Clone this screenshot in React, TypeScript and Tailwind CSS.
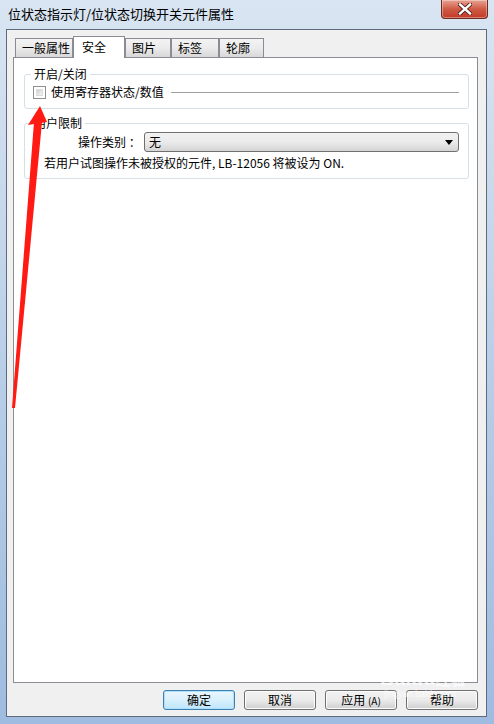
import React from 'react';

const cjk = { fontFamily: '"Noto Sans CJK SC", "Noto Sans", sans-serif' };

function Tab({ label, active, w }: { label: string; active?: boolean; w: string }) {
  if (active) {
    return (
      <div
        className={`${w} h-[22px] -mb-px z-10 relative flex items-start pt-[2px] pl-[8px] bg-white border border-b-0 border-[#898c95] text-[12px] leading-[16px] text-black`}
      >
        {label}
      </div>
    );
  }
  return (
    <div
      className={`${w} h-[19px] flex items-center pl-[6px] border border-b-0 border-[#898c95] bg-gradient-to-b from-[#f3f3f3] via-[#ebebeb] to-[#d8d8d8] text-[12px] leading-[16px] text-black`}
    >
      {label}
    </div>
  );
}

function Btn({ label, primary }: { label: React.ReactNode; primary?: boolean }) {
  return (
    <button
      className={
        primary
          ? 'w-[72px] h-[20px] rounded-[3px] border border-[#3c7fb1] bg-gradient-to-b from-[#eaf6fd] via-[#d9f0fc] to-[#bee6fd] text-[12px] leading-none text-black shadow-[inset_0_0_0_1px_#aee0fb]'
          : 'w-[72px] h-[20px] rounded-[3px] border border-[#707070] bg-gradient-to-b from-[#f2f2f2] via-[#ebebeb] to-[#cfcfcf] text-[12px] leading-none text-black shadow-[inset_0_0_0_1px_#fcfcfc]'
      }
    >
      {label}
    </button>
  );
}

export default function App() {
  return (
    <div
      className="relative w-[494px] h-[724px] overflow-hidden bg-gradient-to-b from-[#d9e5f2] via-[#b9cfe8] to-[#9fbbe0] flex flex-col"
      style={cjk}
    >
      {/* 标题栏 */}
      <div className="h-[29px] shrink-0 flex items-center pl-[8px] pb-[2px] text-[13px] text-black">
        位状态指示灯/位状态切换开关元件属性
      </div>

      {/* 关闭按钮 */}
      <div className="absolute top-0 right-[6px] w-[47px] h-[19px] rounded-b-[4px] border border-t-0 border-[#6b2a22] bg-gradient-to-b from-[#e8a393] via-[#cf5a45] to-[#c23b26] flex items-center justify-center shadow-[inset_0_0_0_1px_rgba(255,255,255,0.35)]">
        <svg width="14" height="12" viewBox="0 0 14 12">
          <path
            d="M2 1.5 L12 10.5 M12 1.5 L2 10.5"
            stroke="#4a1e18"
            strokeWidth="4.2"
            strokeLinecap="square"
          />
          <path
            d="M2 1.5 L12 10.5 M12 1.5 L2 10.5"
            stroke="#ffffff"
            strokeWidth="2.4"
            strokeLinecap="square"
          />
        </svg>
      </div>

      {/* 客户区 */}
      <div className="mx-[6px] mr-[7px] mb-[7px] flex-1 flex flex-col border border-[#5d6b7c] bg-[#f0f0f0]">
        {/* 选项卡 */}
        <div className="flex items-end pl-[8px] pt-[6px] h-[27px] shrink-0">
          <Tab label="一般属性" w="w-[58px]" />
          <Tab label="安全" w="w-[52px]" active />
          <Tab label="图片" w="w-[46px]" />
          <Tab label="标签" w="w-[48px]" />
          <Tab label="轮廓" w="w-[45px]" />
        </div>

        {/* 面板 */}
        <div className="ml-[6px] mr-[8px] h-[626px] border border-[#898c95] bg-white pl-[10px] pr-[8px] pt-[16px]">
          {/* 开启/关闭 */}
          <div className="relative h-[35px] rounded-[3px] border border-[#d5dfe5]">
            <div className="absolute -top-[9px] left-[6px] px-[3px] bg-white text-[12px] leading-[16px] text-black">
              开启/关闭
            </div>
            <div className="flex items-center h-full pt-[1px] pl-[8px] pr-[9px]">
              <div className="w-[13px] h-[13px] border border-[#8f8f8f] bg-white p-[2px]">
                <div className="w-full h-full bg-gradient-to-br from-[#cbcfd5] to-[#f6f6f6] border border-[#dcdcdc]" />
              </div>
              <span className="ml-[5px] text-[12px] leading-[16px] text-black">使用寄存器状态/数值</span>
              <div className="flex-1 ml-[7px] h-px bg-[#a0a0a0]" />
            </div>
          </div>

          {/* 用户限制 */}
          <div className="relative mt-[14px] h-[56px] rounded-[3px] border border-[#d5dfe5] pt-[8px]">
            <div className="absolute -top-[9px] left-[6px] px-[3px] bg-white text-[12px] leading-[16px] text-black">
              用户限制
            </div>
            <div className="flex items-center pr-[9px]">
              <span className="ml-[53px] w-[66px] text-[12px] leading-[16px] text-black whitespace-pre">操作类别 ：</span>
              <div className="flex-1 h-[20px] rounded-[3px] border border-[#707070] bg-gradient-to-b from-[#f2f2f2] via-[#ebebeb] to-[#d4d4d4] flex items-center pl-[4px] pr-[5px]">
                <span className="flex-1 text-[12px] leading-none text-black">无</span>
                <svg width="8" height="5" viewBox="0 0 8 5">
                  <path d="M0 0 H8 L4 5 Z" fill="#000" />
                </svg>
              </div>
            </div>
            <div className="mt-[3px] pl-[19px] text-[12px] leading-[16px] text-black whitespace-nowrap">
              若用户试图操作未被授权的元件, LB-12056 将被设为 ON.
            </div>
          </div>
        </div>

        {/* 按钮 */}
        <div className="flex justify-end gap-[9px] pr-[8px] pt-[7px]">
          <Btn label="确定" primary />
          <Btn label="取消" />
          <Btn label={<span>应用 <span className="text-[10px]">(A)</span></span>} />
          <Btn label="帮助" />
        </div>
      </div>

      {/* 水印 */}
      <div className="absolute left-[380px] top-[668px] pointer-events-none text-white/70 leading-none">
        <div className="text-[20px] font-bold" style={{ fontFamily: '"Liberation Sans", sans-serif' }}>
          Baidu<span className="text-[15px]" style={cjk}>经验</span>
        </div>
        <div className="text-[9px] mt-[2px] pl-[4px]" style={{ fontFamily: '"Liberation Sans", sans-serif' }}>
          jingyan.baidu.com
        </div>
      </div>

      {/* 红色箭头 */}
      <svg className="absolute left-0 top-0 pointer-events-none" width="494" height="724">
        <polygon points="34,122 42,122 15,408 12,408" fill="#ff1a14" />
        <polygon points="40,106 28,125 47,122" fill="#ff1a14" />
      </svg>
    </div>
  );
}
